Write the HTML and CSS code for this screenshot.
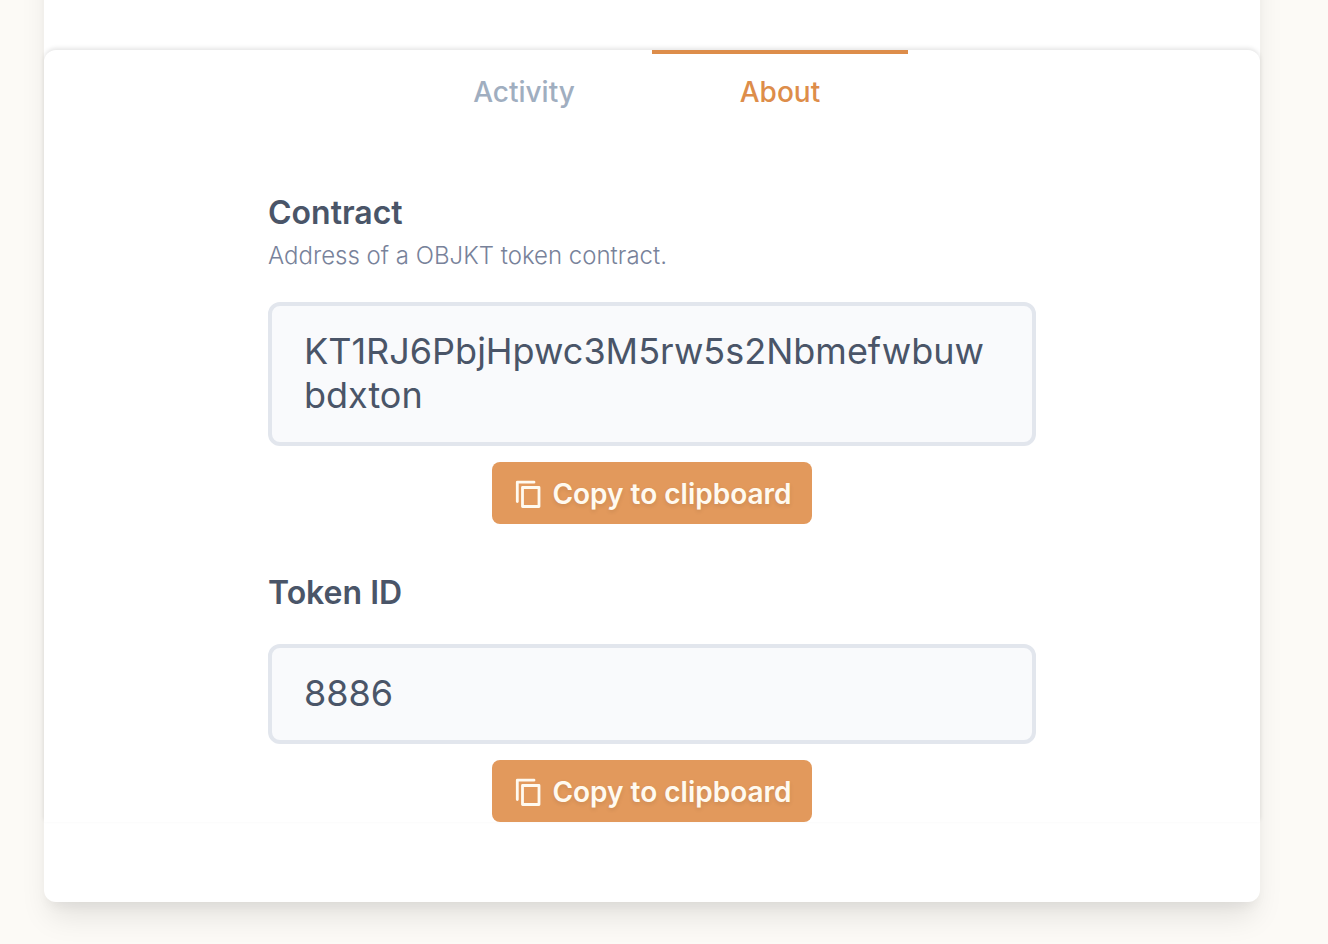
FILE: index.html
```
<!DOCTYPE html>
<html lang="en">
  <head>
    <meta charset="UTF-8" />
    <meta name="viewport" content="width=device-width, initial-scale=1.0" />
    <title>Asset details</title>
    <link rel="stylesheet" href="styles.css">
  </head>
  <body>
    <main class="page">
      <div class="details">
        <!-- Tabs -->
        <nav class="tabs">
          <a href="#activity" class="tab">Activity</a>
          <a href="#about" class="tab active" aria-current="page">About</a>
        </nav>

        <!-- About tab -->
        <form class="about" id="about">
          <div class="field">
            <label for="contract">
              <span class="label-title">Contract</span>
              <span class="label-description">Address of a OBJKT token contract.</span>
            </label>
            <textarea id="contract" rows="2" readonly spellcheck="false">KT1RJ6PbjHpwc3M5rw5s2Nbmefwbuwbdxton</textarea>
            <button type="button" class="copy-btn">
              <svg class="copy-icon" viewBox="0 0 28 30" aria-hidden="true">
                <path d="M3.3 22.5V3.2H20" />
                <path d="M8.5 8.5H25V27.5H8.5Z" />
              </svg>
              Copy to clipboard
            </button>
          </div>

          <div class="field">
            <label for="tokenId">
              <span class="label-title">Token ID</span>
            </label>
            <input type="text" id="tokenId" value="8886" readonly />
            <button type="button" class="copy-btn">
              <svg class="copy-icon" viewBox="0 0 28 30" aria-hidden="true">
                <path d="M3.3 22.5V3.2H20" />
                <path d="M8.5 8.5H25V27.5H8.5Z" />
              </svg>
              Copy to clipboard
            </button>
          </div>
        </form>
      </div>
    </main>
  </body>
</html>
```

FILE: styles.css
```
* {
  box-sizing: border-box;
}

body {
  font-family: Inter, "Liberation Sans", sans-serif;
  background: #fcfaf6;
  margin: 0;
  padding: 0 68px 42px 44px;
  color: #4a5568;
}

/* The card runs off the top edge of the window */
.page {
  background: #fff;
  margin-top: -60px;
  padding: 110px 0 80px;
  border-radius: 12px;
  box-shadow: 0 20px 30px -6px rgba(0, 0, 0, 0.1), 0 8px 12px -4px rgba(0, 0, 0, 0.05);
}

.details {
  background: #fff;
  border-radius: 12px 12px 0 0;
  box-shadow: 0 -2px 4px rgba(0, 0, 0, 0.1);
}

.tabs {
  display: flex;
  justify-content: center;
}

.tab {
  width: 256px;
  padding: 20px 0;
  border-top: 4px solid transparent;
  font-size: 28px;
  font-weight: 500;
  line-height: 36px;
  text-align: center;
  text-decoration: none;
  color: #a0aec0;
}

.tab.active {
  border-color: #dd8d4a;
  color: #dd8d4a;
}

.about {
  display: flex;
  flex-direction: column;
  gap: 48px;
  max-width: 768px;
  margin: 0 auto;
  padding-top: 62px;
}

.field {
  display: flex;
  flex-direction: column;
  align-items: center;
}

.field label {
  display: flex;
  flex-direction: column;
  gap: 6px;
  width: 100%;
  margin-bottom: 30px;
}

.label-title {
  font-size: 32px;
  font-weight: 600;
  line-height: 42px;
}

.label-description {
  font-size: 24px;
  font-weight: 300;
  line-height: 32px;
  color: #78829a;
}

.field textarea,
.field input {
  display: block;
  width: 100%;
  margin: 0 0 16px;
  padding: 23px 32px 25px;
  border: 4px solid #e2e6ed;
  border-radius: 12px;
  background: #f9fafc;
  color: #4a5568;
  font-family: inherit;
  font-size: 36px;
  line-height: 44px;
  resize: none;
  overflow: hidden;
}

.field input {
  height: 100px;
}

.copy-btn {
  display: flex;
  align-items: center;
  justify-content: center;
  gap: 10px;
  height: 62px;
  padding: 2px 20px 0 22px;
  border: none;
  border-radius: 8px;
  background: #e2995c;
  color: #fffaf0;
  font-family: inherit;
  font-size: 28px;
  font-weight: 600;
  text-shadow: 0 2px 4px rgba(0, 0, 0, 0.1);
  cursor: pointer;
}

.copy-icon {
  width: 28px;
  height: 30px;
  fill: none;
  stroke: currentColor;
  stroke-width: 2.8;
  stroke-linecap: round;
  stroke-linejoin: round;
}
```
